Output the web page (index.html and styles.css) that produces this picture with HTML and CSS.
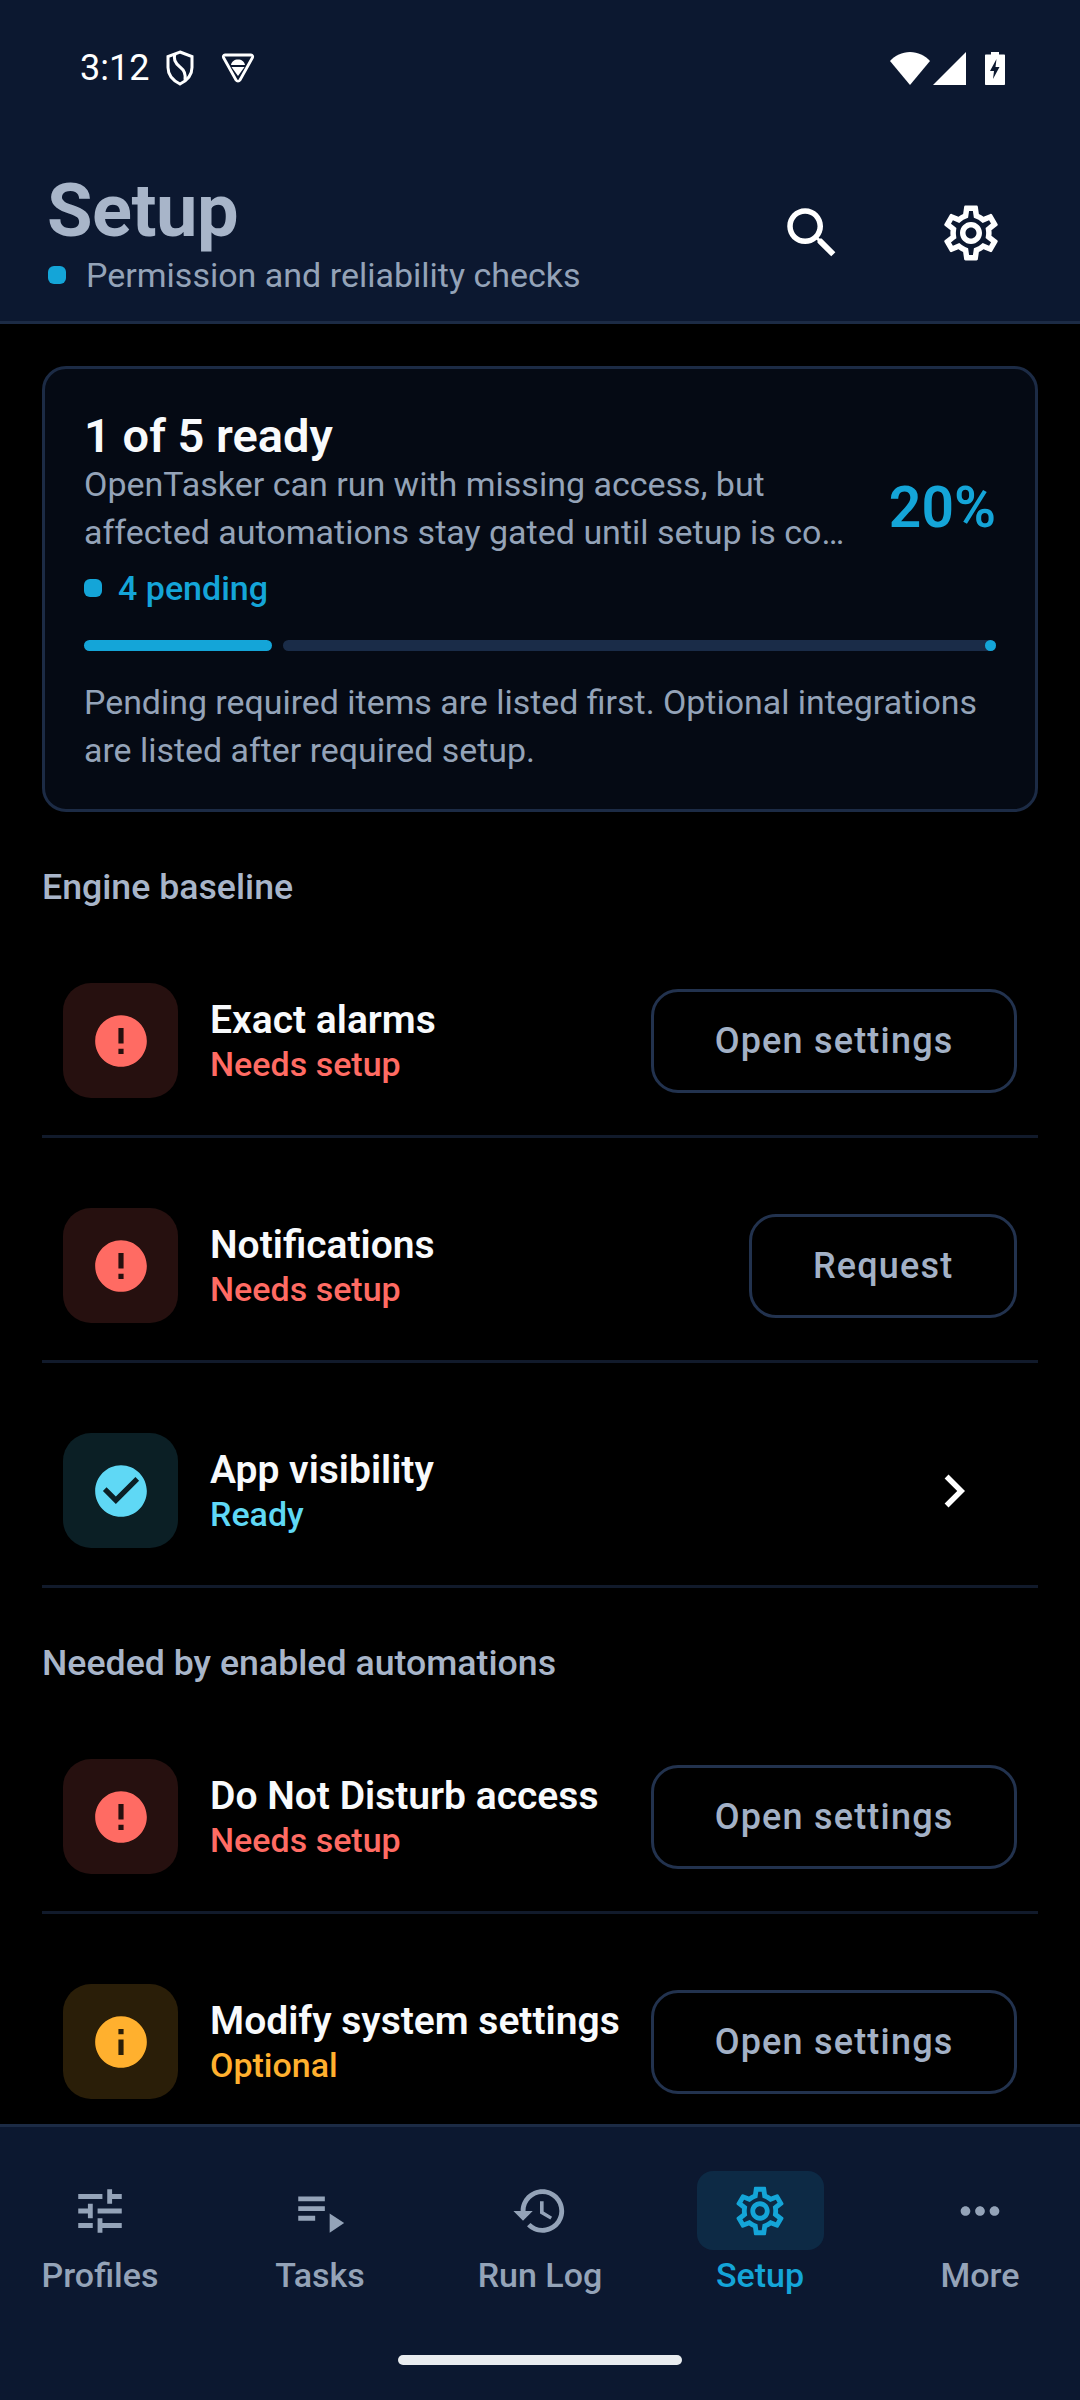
FILE: index.html
```html
<!DOCTYPE html>
<html lang="en">
<head>
    <meta charset="UTF-8">
    <meta name="viewport" content="width=device-width, initial-scale=1.0">
    <title>Setup</title>
    <link rel="stylesheet" href="styles.css">
</head>
<body>
    <svg class="sprite" width="0" height="0">
        <symbol id="i-gear" viewBox="0 0 24 24"><path d="M19.43 12.98c.04-.32.07-.64.07-.98 0-.34-.03-.66-.07-.98l2.11-1.65c.19-.15.24-.42.12-.64l-2-3.46c-.09-.16-.26-.25-.44-.25-.06 0-.12.01-.17.03l-2.49 1c-.52-.4-1.08-.73-1.69-.98l-.38-2.65C14.46 2.18 14.25 2 14 2h-4c-.25 0-.46.18-.49.42l-.38 2.65c-.61.25-1.17.59-1.69.98l-2.49-1c-.06-.02-.12-.03-.18-.03-.17 0-.34.09-.43.25l-2 3.46c-.13.22-.07.49.12.64l2.11 1.65c-.04.32-.07.65-.07.98 0 .33.03.66.07.98l-2.11 1.65c-.19.15-.24.42-.12.64l2 3.46c.09.16.26.25.44.25.06 0 .12-.01.17-.03l2.49-1c.52.4 1.08.73 1.69.98l.38 2.65c.03.24.24.42.49.42h4c.25 0 .46-.18.49-.42l.38-2.65c.61-.25 1.17-.59 1.69-.98l2.49 1c.06.02.12.03.18.03.17 0 .34-.09.43-.25l2-3.46c.12-.22.07-.49-.12-.64l-2.11-1.65zm-1.98-1.71c.04.31.05.52.05.73 0 .21-.02.43-.05.73l-.14 1.13.89.7 1.08.84-.7 1.21-1.27-.51-1.04-.42-.9.68c-.43.32-.84.56-1.25.73l-1.06.43-.16 1.13-.2 1.35h-1.4l-.19-1.35-.16-1.13-1.06-.43c-.43-.18-.83-.41-1.23-.71l-.91-.7-1.06.43-1.27.51-.7-1.21 1.08-.84.89-.7-.14-1.13c-.03-.31-.05-.54-.05-.74s.02-.43.05-.73l.14-1.13-.89-.7-1.08-.84.7-1.21 1.27.51 1.04.42.9-.68c.43-.32.84-.56 1.25-.73l1.06-.43.16-1.13.2-1.35h1.39l.19 1.35.16 1.13 1.06.43c.43.18.83.41 1.23.71l.91.7 1.06-.43 1.27-.51.7 1.21-1.07.85-.89.7.14 1.13zM12 8c-2.21 0-4 1.79-4 4s1.79 4 4 4 4-1.79 4-4-1.79-4-4-4zm0 6c-1.1 0-2-.9-2-2s.9-2 2-2 2 .9 2 2-.9 2-2 2z"/></symbol>
        <symbol id="i-error" viewBox="0 0 24 24"><path d="M12 2C6.48 2 2 6.48 2 12s4.48 10 10 10 10-4.48 10-10S17.52 2 12 2zm1 15h-2v-2h2v2zm0-4h-2V7h2v6z"/></symbol>
        <symbol id="i-check" viewBox="0 0 24 24"><path d="M12 2C6.48 2 2 6.48 2 12s4.48 10 10 10 10-4.48 10-10S17.52 2 12 2zm-2 15l-5-5 1.41-1.41L10 14.17l7.59-7.59L19 8l-9 9z"/></symbol>
        <symbol id="i-info" viewBox="0 0 24 24"><path d="M12 2C6.48 2 2 6.48 2 12s4.48 10 10 10 10-4.48 10-10S17.52 2 12 2zm1 15h-2v-6h2v6zm0-8h-2V7h2v2z"/></symbol>
    </svg>

    <!-- Top app bar with status bar -->
    <header class="topbar">
        <div class="status">
            <div class="status-left">
                <span class="clock">3:12</span>
                <svg class="st-shield" viewBox="0 0 30 36" fill="none" stroke="#fff" stroke-width="3"><path d="M15 2l12 4.500v11c0 8-5 13-12 16.500C8 30.500 3 25.500 3 17.500v-11z"/><path d="M10 4c-2 5 0 9 5 13 4 3 6 7 5 13"/></svg>
                <svg class="st-vpn" viewBox="0 0 34 32"><path d="M4 3h26c1.500 0 2 1.500 1.500 2.500L19 28c-1 1.500-3 1.500-4 0L2.500 5.500C2 4.500 2.500 3 4 3z" fill="none" stroke="#fff" stroke-width="2.800"/><path d="M10 13c.5-3.500 3.500-5.500 7-5.500s6.500 2 7 5.500zM10.500 15h13L17 24z" fill="#fff"/></svg>
            </div>
            <div class="status-right">
                <svg class="st-wifi" viewBox="0 0 40 33" fill="#fff"><path d="M0 9C5 3.500 12 0 20 0s15 3.500 20 9L20 33z"/></svg>
                <svg class="st-signal" viewBox="0 0 33 33" fill="#fff"><path d="M33 0v33H0z"/></svg>
                <svg class="st-batt" viewBox="0 0 20 33"><path d="M6 0h8v2.500h5c.6 0 1 .4 1 1V32c0 .6-.4 1-1 1H1c-.6 0-1-.4-1-1V3.500c0-.6.4-1 1-1h5z" fill="#fff"/><path d="M11.500 7L5 19h4l-1 8 6.500-12h-4z" fill="#0c1830"/></svg>
            </div>
        </div>
        <div class="titlebar">
            <div class="title-block">
                <h1>Setup</h1>
                <div class="subtitle"><span class="dot"></span>Permission and reliability checks</div>
            </div>
            <button class="icon-btn">
                <svg viewBox="0 0 24 24" fill="#fff"><path d="M15.5 14h-.79l-.28-.27C15.41 12.59 16 11.11 16 9.5 16 5.910 13.090 3 9.500 3S3 5.910 3 9.500 5.910 16 9.500 16c1.610 0 3.090-.59 4.230-1.570l.27.28v.79l5 4.990L20.490 19l-4.990-5zm-6 0C7.010 14 5 11.990 5 9.500S7.010 5 9.500 5 14 7.010 14 9.500 11.990 14 9.500 14z"/></svg>
            </button>
            <button class="icon-btn">
                <svg fill="#fff"><use href="#i-gear"/></svg>
            </button>
        </div>
    </header>

    <main class="content">
        <!-- Summary card -->
        <section class="card">
            <div class="card-top">
                <div class="card-text">
                    <h2>1 of 5 ready</h2>
                    <p class="card-desc">
                        <span class="desc-line">OpenTasker can run with missing access, but</span>
                        <span class="desc-line">affected automations stay gated until setup is complete.</span>
                    </p>
                    <div class="pending"><span class="dot"></span>4 pending</div>
                </div>
                <div class="percent">20%</div>
            </div>
            <div class="progress">
                <div class="progress-fill"></div>
                <div class="progress-track"><span class="progress-stop"></span></div>
            </div>
            <p class="card-note">Pending required items are listed first. Optional integrations are listed after required setup.</p>
        </section>

        <h3 class="section-title">Engine baseline</h3>

        <div class="row">
            <div class="row-icon red"><svg><use href="#i-error"/></svg></div>
            <div class="row-text">
                <div class="row-title">Exact alarms</div>
                <div class="row-sub red">Needs setup</div>
            </div>
            <button class="action">Open settings</button>
        </div>

        <div class="row">
            <div class="row-icon red"><svg><use href="#i-error"/></svg></div>
            <div class="row-text">
                <div class="row-title">Notifications</div>
                <div class="row-sub red">Needs setup</div>
            </div>
            <button class="action">Request</button>
        </div>

        <div class="row">
            <div class="row-icon cyan"><svg><use href="#i-check"/></svg></div>
            <div class="row-text">
                <div class="row-title">App visibility</div>
                <div class="row-sub cyan">Ready</div>
            </div>
            <svg class="chevron" viewBox="0 0 24 24" fill="#fff"><path d="M10 6L8.590 7.410 13.170 12l-4.580 4.590L10 18l6-6z"/></svg>
        </div>

        <h3 class="section-title">Needed by enabled automations</h3>

        <div class="row">
            <div class="row-icon red"><svg><use href="#i-error"/></svg></div>
            <div class="row-text">
                <div class="row-title">Do Not Disturb access</div>
                <div class="row-sub red">Needs setup</div>
            </div>
            <button class="action">Open settings</button>
        </div>

        <div class="row">
            <div class="row-icon amber"><svg><use href="#i-info"/></svg></div>
            <div class="row-text">
                <div class="row-title">Modify system settings</div>
                <div class="row-sub amber">Optional</div>
            </div>
            <button class="action">Open settings</button>
        </div>
    </main>

    <!-- Bottom navigation -->
    <nav class="bottom-nav">
        <div class="nav-items">
            <div class="nav-item">
                <div class="nav-icon"><svg viewBox="0 0 24 24"><path d="M3 17v2h6v-2H3zM3 5v2h10V5H3zm10 16v-2h8v-2h-8v-2h-2v6h2zM7 9v2H3v2h4v2h2V9H7zm14 4v-2H11v2h10zm-6-4h2V7h4V5h-4V3h-2v6z"/></svg></div>
                <span>Profiles</span>
            </div>
            <div class="nav-item">
                <div class="nav-icon"><svg viewBox="0 0 24 24"><path d="M3 10h11v2H3zM3 6h11v2H3zM3 14h7v2H3zM16 13v8l6-4z"/></svg></div>
                <span>Tasks</span>
            </div>
            <div class="nav-item">
                <div class="nav-icon"><svg viewBox="0 0 24 24"><path d="M13 3c-4.970 0-9 4.030-9 9H1l3.890 3.890.07.14L9 12H6c0-3.870 3.130-7 7-7s7 3.130 7 7-3.130 7-7 7c-1.930 0-3.680-.79-4.940-2.060l-1.420 1.420C8.270 19.990 10.510 21 13 21c4.970 0 9-4.030 9-9s-4.030-9-9-9zm-1 5v5l4.280 2.540.72-1.210-3.500-2.080V8H12z"/></svg></div>
                <span>Run Log</span>
            </div>
            <div class="nav-item active">
                <div class="nav-icon"><svg><use href="#i-gear"/></svg></div>
                <span>Setup</span>
            </div>
            <div class="nav-item">
                <div class="nav-icon"><svg viewBox="0 0 24 24"><path d="M6 10c-1.100 0-2 .9-2 2s.9 2 2 2 2-.9 2-2-.9-2-2-2zm12 0c-1.100 0-2 .9-2 2s.9 2 2 2 2-.9 2-2-.9-2-2-2zm-6 0c-1.100 0-2 .9-2 2s.9 2 2 2 2-.9 2-2-.9-2-2-2z"/></svg></div>
                <span>More</span>
            </div>
        </div>
        <div class="home-bar"></div>
    </nav>
</body>
</html>
```

FILE: styles.css
```css
* {
    box-sizing: border-box;
}

body {
    margin: 0;
    width: 1080px;
    height: 2400px;
    display: flex;
    flex-direction: column;
    overflow: hidden;
    background: #000;
    color: #f8fafc;
    font-family: 'Roboto', 'Liberation Sans', sans-serif;
}

.sprite {
    position: absolute;
}

h1, h2, h3, p {
    margin: 0;
}

button {
    font-family: inherit;
    background: none;
    cursor: pointer;
}

.dot {
    width: 18px;
    height: 18px;
    border-radius: 6px;
    background: #14a5d8;
    flex-shrink: 0;
}

/* Top bar */
.topbar {
    height: 324px;
    flex-shrink: 0;
    background: #0c1830;
    border-bottom: 3px solid #1c2b45;
}

.status {
    height: 136px;
    padding: 0 75px 0 80px;
    display: flex;
    align-items: center;
    justify-content: space-between;
}

.status-left, .status-right {
    display: flex;
    align-items: center;
}

.clock {
    font-size: 36px;
    color: #fff;
}

.st-shield {
    width: 30px;
    height: 36px;
    margin-left: 16px;
}

.st-vpn {
    width: 34px;
    height: 32px;
    margin-left: 26px;
}

.st-wifi {
    width: 40px;
    height: 33px;
}

.st-signal {
    width: 33px;
    height: 33px;
    margin-left: 3px;
}

.st-batt {
    width: 20px;
    height: 33px;
    margin-left: 19px;
}

.titlebar {
    display: flex;
    align-items: flex-start;
    padding: 34px 46px 0 48px;
}

.title-block {
    flex: 1;
    padding-top: 5px;
}

h1 {
    margin-left: -1px;
    font-size: 74px;
    line-height: 72px;
    font-weight: 700;
    color: #a8b5c9;
    letter-spacing: -0.5px;
}

.subtitle {
    display: flex;
    align-items: center;
    gap: 20px;
    margin-top: 6px;
    font-size: 34px;
    line-height: 44px;
    color: #94a3b8;
}

.icon-btn {
    width: 126px;
    height: 126px;
    margin-left: 33px;
    border: none;
    padding: 30px;
    display: flex;
}

.icon-btn svg {
    width: 66px;
    height: 66px;
}

/* Scrolling content */
.content {
    flex: 1;
    min-height: 0;
    overflow: hidden;
    padding: 42px 42px 0;
}

.card {
    height: 446px;
    padding: 43px 39px 0;
    background: #050a14;
    border: 3px solid #1c2b45;
    border-radius: 24px;
}

.card-top {
    display: flex;
    align-items: center;
    justify-content: space-between;
}

.card-text {
    width: 770px;
}

h2 {
    font-size: 47px;
    line-height: 48px;
    font-weight: 600;
    color: #f8fafc;
}

.card-desc {
    font-size: 34px;
    line-height: 48px;
    color: #94a3b8;
}

.desc-line {
    display: block;
    white-space: nowrap;
    overflow: hidden;
    text-overflow: ellipsis;
}

.pending {
    display: flex;
    align-items: center;
    gap: 16px;
    margin-top: 10px;
    font-size: 34px;
    line-height: 44px;
    font-weight: 500;
    color: #14a5d8;
}

.percent {
    margin-bottom: 8px;
    font-size: 57px;
    font-weight: 600;
    color: #14a5d8;
}

.progress {
    display: flex;
    gap: 11px;
    height: 11px;
    margin-top: 30px;
}

.progress-fill {
    width: 188px;
    background: #14a5d8;
    border-radius: 6px;
}

.progress-track {
    flex: 1;
    position: relative;
    background: #1a2c48;
    border-radius: 6px;
}

.progress-stop {
    position: absolute;
    right: 0;
    top: 0;
    width: 11px;
    height: 11px;
    border-radius: 50%;
    background: #14a5d8;
}

.card-note {
    margin-top: 28px;
    font-size: 33.9px;
    line-height: 48px;
    color: #94a3b8;
}

.section-title {
    margin-top: 50px;
    margin-bottom: 34px;
    font-size: 35.7px;
    line-height: 50px;
    font-weight: 500;
    color: #a8b5c9;
}

.row {
    display: flex;
    align-items: center;
    height: 192px;
    margin-top: 33px;
    padding: 0 21px;
    border-bottom: 3px solid #111a2b;
}

.row-icon {
    width: 115px;
    height: 115px;
    flex-shrink: 0;
    border-radius: 28px;
    display: flex;
    align-items: center;
    justify-content: center;
}

.row-icon svg {
    width: 62px;
    height: 62px;
}

.row-icon.red {
    background: #26100f;
    fill: #ff6b63;
}

.row-icon.cyan {
    background: #0b1f25;
    fill: #5fd8f5;
}

.row-icon.amber {
    background: #2a1e08;
    fill: #ffb02e;
}

.row-text {
    flex: 1;
    min-width: 0;
    margin-left: 32px;
}

.row-title {
    font-size: 39px;
    line-height: 46px;
    font-weight: 600;
    color: #f8fafc;
    white-space: nowrap;
}

.row-sub {
    font-size: 34px;
    line-height: 42px;
    font-weight: 500;
}

.row-sub.red {
    color: #ff6b63;
}

.row-sub.cyan {
    color: #5fd8f5;
}

.row-sub.amber {
    color: #ffb02e;
}

.action {
    height: 104px;
    padding: 0 60.5px;
    border: 3px solid #22324e;
    border-radius: 27px;
    font-size: 36px;
    font-weight: 500;
    letter-spacing: 1.2px;
    color: #a3b1c6;
    white-space: nowrap;
}

.chevron {
    width: 66px;
    height: 66px;
    margin-right: 30px;
}

/* Bottom nav */
.bottom-nav {
    height: 276px;
    flex-shrink: 0;
    background: #0c1830;
    border-top: 3px solid #1c2b45;
    display: flex;
    flex-direction: column;
}

.nav-items {
    display: flex;
    margin: 0 -10px;
    padding-top: 44px;
}

.nav-item {
    flex: 1;
    display: flex;
    flex-direction: column;
    align-items: center;
    font-size: 34px;
    line-height: 44px;
    font-weight: 500;
    color: #94a3b8;
}

.nav-icon {
    width: 127px;
    height: 79px;
    margin-bottom: 3px;
    border-radius: 16px;
    display: flex;
    align-items: center;
    justify-content: center;
    fill: #94a3b8;
}

.nav-icon svg {
    width: 58px;
    height: 58px;
}

.nav-item.active {
    color: #14a5d8;
}

.nav-item.active .nav-icon {
    background: #0d2a45;
    fill: #14a5d8;
}

.home-bar {
    width: 284px;
    height: 10px;
    margin: 58px auto 0;
    border-radius: 5px;
    background: #e9ecef;
}
```
